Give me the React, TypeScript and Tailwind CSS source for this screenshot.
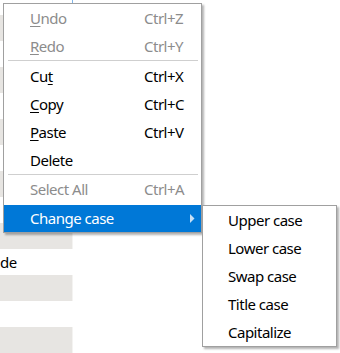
import { ReactNode } from 'react';

type Item = {
  label: ReactNode;
  shortcut?: string;
  disabled?: boolean;
};

const top: Item[] = [
  { label: <><u>U</u>ndo</>, shortcut: 'Ctrl+Z', disabled: true },
  { label: <><u>R</u>edo</>, shortcut: 'Ctrl+Y', disabled: true },
];

const edit: Item[] = [
  { label: <>Cu<u>t</u></>, shortcut: 'Ctrl+X' },
  { label: <><u>C</u>opy</>, shortcut: 'Ctrl+C' },
  { label: <><u>P</u>aste</>, shortcut: 'Ctrl+V' },
  { label: 'Delete' },
];

const cases = ['Upper case', 'Lower case', 'Swap case', 'Title case', 'Capitalize'];

const MenuRow = ({ item }: { item: Item }) => (
  <div
    className={`grid h-[28px] grid-cols-[114px_1fr] items-center pl-[26px] ${
      item.disabled ? 'text-[#8c8c8c]' : 'text-black'
    }`}
  >
    <span className="underline-offset-[2px]">{item.label}</span>
    <span>{item.shortcut}</span>
  </div>
);

const Separator = ({ gap }: { gap: string }) => (
  <div className={`${gap} ml-[4px] mr-[3px] h-px bg-[#cfcfcf]`} />
);

const Background = () => (
  <div className="flex flex-col pt-[15px]">
    {[0, 1, 2, 3, 4, 5, 6].map((i) => (
      <div key={i} className="flex flex-col">
        <div className="h-[26px] w-[73px] border-r border-[#f4f3f1] bg-[#e7e5e2]" />
        <div className="flex h-[26px] items-center text-black">
          {i === 4 ? 'de' : ''}
        </div>
      </div>
    ))}
  </div>
);

export default function App() {
  return (
    <div className="relative h-[353px] w-[340px] overflow-hidden bg-white font-['Noto_Sans',sans-serif] text-[15px] leading-none tracking-[-0.5px]">
      <Background />
      <div className="absolute left-[72px] top-0 h-[3px] w-px bg-[#7fb4e6]" />

      <div className="absolute left-[3px] top-[3px] w-[199px] border border-[#a0a0a0] bg-white shadow-[2px_2px_2px_rgba(0,0,0,0.3)]">
        {top.map((item, i) => (
          <MenuRow key={i} item={item} />
        ))}
        <Separator gap="mt-[0px] mb-px" />
        {edit.map((item, i) => (
          <MenuRow key={i} item={item} />
        ))}
        <Separator gap="mb-0" />
        <MenuRow item={{ label: 'Select All', shortcut: 'Ctrl+A', disabled: true }} />
        <div className="mt-[2px] flex h-[27px] items-center justify-between bg-[#0078d7] pl-[26px] pr-[6px] text-white">
          <span>Change case</span>
          <svg width="5" height="9" viewBox="0 0 5 9">
            <path d="M0 0 L4.5 4.5 L0 9 Z" fill="#c6e0f6" />
          </svg>
        </div>
      </div>

      <div className="absolute left-[202px] top-[205px] w-[135px] border border-[#a0a0a0] bg-white shadow-[2px_2px_2px_rgba(0,0,0,0.3)]">
        {cases.map((c) => (
          <div key={c} className="flex h-[28px] items-center pl-[25px] text-black">
            {c}
          </div>
        ))}
      </div>
    </div>
  );
}
